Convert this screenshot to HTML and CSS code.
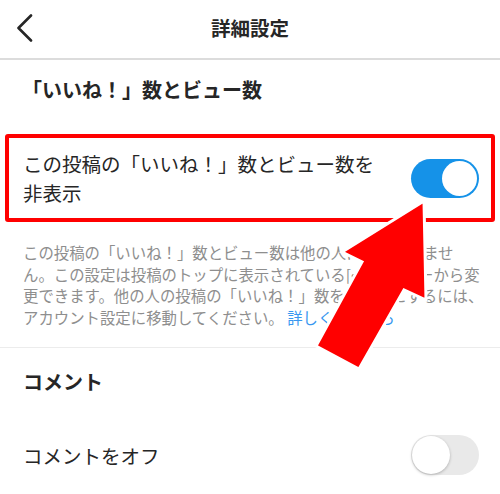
FILE: index.html
```html
<!DOCTYPE html>
<html lang="ja">
<head>
<meta charset="utf-8">
<title>詳細設定</title>
<link rel="stylesheet" href="styles.css">
</head>
<body>
<div class="page">
  <header class="header">
    <div class="back">
      <svg width="18" height="28" viewBox="0 0 18 28"><polyline points="15,1.5 2.5,14 15,26.5" fill="none" stroke="#262626" stroke-width="2.6" stroke-linecap="round" stroke-linejoin="round"/></svg>
    </div>
    <h1 class="title">詳細設定</h1>
    <div class="spacer"></div>
  </header>

  <h2 class="section-title">「いいね！」数とビュー数</h2>

  <div class="row row-highlight">
    <div class="row-label">この投稿の「いいね！」数とビュー数を<br>非表示</div>
    <div class="toggle toggle-on"><span class="knob"></span></div>
  </div>

  <p class="desc">この投稿の「いいね！」数とビュー数は他の人に表示されませ<br>ん。この設定は投稿のトップに表示されている[•••]メニューから変<br>更できます。他の人の投稿の「いいね！」数を非表示にするには、<br>アカウント設定に移動してください。 <span class="link">詳しくはこちら</span></p>

  <div class="divider"></div>

  <h2 class="section-title section-comment">コメント</h2>

  <div class="row row-plain">
    <div class="row-label">コメントをオフ</div>
    <div class="toggle toggle-off"><span class="knob"></span></div>
  </div>

  <svg class="arrow" width="500" height="494" viewBox="0 0 500 494">
    <polygon points="424,201 426,300 404,290 359,369 316,346 362,262 342,252" fill="#ff0000" stroke="#ffffff" stroke-width="3" stroke-linejoin="miter"/>
  </svg>
</div>
</body>
</html>
```

FILE: styles.css
```css
* { box-sizing: border-box; }
html, body { margin: 0; padding: 0; background: #fff; }
body {
  font-family: "Noto Sans CJK JP", "Noto Sans", sans-serif;
  color: #262626;
  width: 500px;
  height: 494px;
  overflow: hidden;
}
.page { position: relative; width: 500px; height: 494px; }

.header {
  height: 60px;
  border-bottom: 2px solid #dcdcdc;
  display: grid;
  grid-template-columns: 60px 1fr 60px;
  align-items: center;
}
.back { padding-left: 16px; display: flex; align-items: center; height: 28px; margin-top: -2px; }
.title {
  margin: 0;
  text-align: center;
  font-size: 19.5px;
  font-weight: 600;
  line-height: 28px;
  margin-top: -2px;
}
.section-title {
  margin: 16px 0 0;
  padding-left: 22px;
  font-size: 20px;
  font-weight: 700;
  line-height: 28px;
}
.row {
  display: flex;
  align-items: center;
  justify-content: space-between;
}
.row-highlight {
  margin: 30px 5px 0;
  border: 4px solid #ff0000;
  border-radius: 3px;
  padding: 11px 12px 11px 14px;
  min-height: 88px;
}
.row-label {
  font-size: 19.5px;
  line-height: 29px;
}
.row-plain {
  margin: 39px 0 0;
  padding: 0 21px 0 23px;
}
.toggle {
  width: 68px;
  height: 39px;
  border-radius: 20px;
  position: relative;
  flex: none;
}
.toggle-on { background: #1592e8; }
.toggle-off { background: #e9e9e9; height: 40px; }
.knob {
  position: absolute;
  top: 2px;
  width: 35px;
  height: 35px;
  border-radius: 50%;
  background: #fff;
}
.toggle-on .knob { right: 2px; }
.toggle-off .knob {
  left: 1px;
  top: 1px;
  width: 38px;
  height: 38px;
  box-shadow: 0 1px 3px rgba(0,0,0,0.25);
}
.desc {
  margin: 20px 0 0;
  padding: 0 10px 0 23px;
  font-size: 15.4px;
  line-height: 21.5px;
  color: #8e8e8e;
  white-space: nowrap;
}
.link { color: #3897f0; }
.divider {
  margin-top: 19px;
  height: 1px;
  background: #ececec;
}
.section-comment { margin-top: 20px; padding-left: 23px; }
.arrow {
  position: absolute;
  left: 0;
  top: 0;
  pointer-events: none;
}
```
